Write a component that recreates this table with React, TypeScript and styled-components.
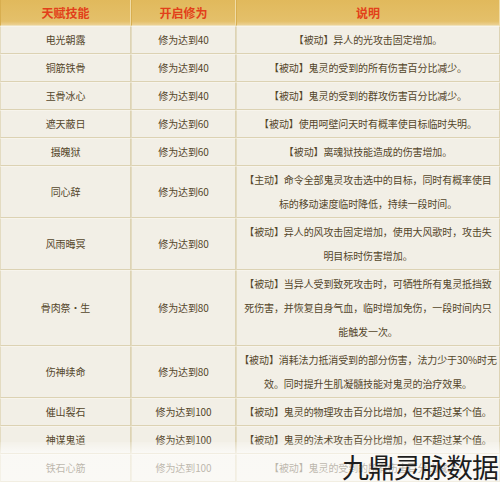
import styled, { createGlobalStyle } from 'styled-components';

const GlobalStyle = createGlobalStyle`
  html, body {
    margin: 0;
    padding: 0;
    background: #ffffff;
  }
  body {
    font-family: "Noto Sans CJK SC", "Noto Sans", sans-serif;
  }
`;

type Skill = {
  name: string;
  level: number;
  lines: string[];
};

const skills: Skill[] = [
  { name: '电光朝露', level: 40, lines: ['【被动】异人的光攻击固定增加。'] },
  { name: '铜筋铁骨', level: 40, lines: ['【被动】鬼灵的受到的所有伤害百分比减少。'] },
  { name: '玉骨冰心', level: 40, lines: ['【被动】鬼灵的受到的群攻伤害百分比减少。'] },
  { name: '遮天蔽日', level: 60, lines: ['【被动】使用呵壁问天时有概率使目标临时失明。'] },
  { name: '摄魄狱', level: 60, lines: ['【被动】离魂狱技能造成的伤害增加。'] },
  {
    name: '同心辞',
    level: 60,
    lines: ['【主动】命令全部鬼灵攻击选中的目标，同时有概率使目', '标的移动速度临时降低，持续一段时间。'],
  },
  {
    name: '风雨晦冥',
    level: 80,
    lines: ['【被动】异人的风攻击固定增加，使用大风歌时，攻击失', '明目标时伤害增加。'],
  },
  {
    name: '骨肉祭・生',
    level: 80,
    lines: [
      '【被动】当异人受到致死攻击时，可牺牲所有鬼灵抵挡致',
      '死伤害，并恢复自身气血，临时增加免伤，一段时间内只',
      '能触发一次。',
    ],
  },
  {
    name: '伤神续命',
    level: 80,
    lines: ['【被动】消耗法力抵消受到的部分伤害，法力少于30%时无', '效。同时提升生肌凝髓技能对鬼灵的治疗效果。'],
  },
  { name: '催山裂石', level: 100, lines: ['【被动】鬼灵的物理攻击百分比增加，但不超过某个值。'] },
  { name: '神谋鬼道', level: 100, lines: ['【被动】鬼灵的法术攻击百分比增加，但不超过某个值。'] },
  { name: '铁石心筋', level: 100, lines: ['【被动】鬼灵的受到的所有伤害百分比减少。'] },
];

const App = () => {
  return (
    <>
      <GlobalStyle />
      <Page>
        <Table>
          <colgroup>
            <col style={{ width: 131 }} />
            <col style={{ width: 105 }} />
            <col style={{ width: 264 }} />
          </colgroup>
          <thead>
            <tr>
              <HeadCell>天赋技能</HeadCell>
              <HeadCell>开启修为</HeadCell>
              <HeadCell>说明</HeadCell>
            </tr>
          </thead>
          <tbody>
            {skills.map((skill) => (
              <tr key={skill.name}>
                <Cell>{skill.name}</Cell>
                <Cell>修为达到{skill.level}</Cell>
                <Cell>
                  {skill.lines.map((line) => (
                    <Line key={line}>{line}</Line>
                  ))}
                </Cell>
              </tr>
            ))}
          </tbody>
        </Table>
        <Fade />
        <Watermark>九鼎灵脉数据</Watermark>
      </Page>
    </>
  );
};

const Page = styled.div`
  position: relative;
  width: 500px;
  height: 484px;
  overflow: hidden;
  background: #ffffff;
`;

const Table = styled.table`
  width: 500px;
  table-layout: fixed;
  border-collapse: separate;
  border-spacing: 0;
  background: #f2efe6;
`;

const HeadCell = styled.th`
  height: 25px;
  padding: 0;
  background: linear-gradient(#e1b95c, #e4c06a 85%, #ecd193);
  color: #e2401a;
  font-size: 12px;
  font-weight: 700;
  text-align: center;
  border-right: 1px solid #f0dca6;
  border-left: 1px solid #d8ae4f;
  border-bottom: 1px solid #efe2bb;
`;

const Cell = styled.td`
  padding: 1px 2px;
  text-align: center;
  vertical-align: middle;
  color: #54462a;
  font-size: 10px;
  line-height: 24px;
  letter-spacing: -0.1px;
  border-left: 1px solid #e3dbc1;
  border-right: 1px solid #ddd3b4;
  border-top: 1px solid #f7f4ec;
  border-bottom: 1px solid #dcd2b3;
  white-space: nowrap;
`;

const Line = styled.div`
  text-align: center;
`;

const Fade = styled.div`
  position: absolute;
  left: 0;
  right: 0;
  bottom: 0;
  height: 42px;
  background: linear-gradient(rgba(255, 255, 255, 0.15), rgba(255, 255, 255, 0.6) 25%, rgba(255, 255, 255, 0.62));
`;

const Watermark = styled.div`
  position: absolute;
  right: 2px;
  bottom: 2px;
  font-family: "Noto Sans CJK SC", sans-serif;
  font-size: 27px;
  font-weight: 400;
  line-height: 30px;
  color: #1d1d1d;
  letter-spacing: -1px;
`;

export default App;
